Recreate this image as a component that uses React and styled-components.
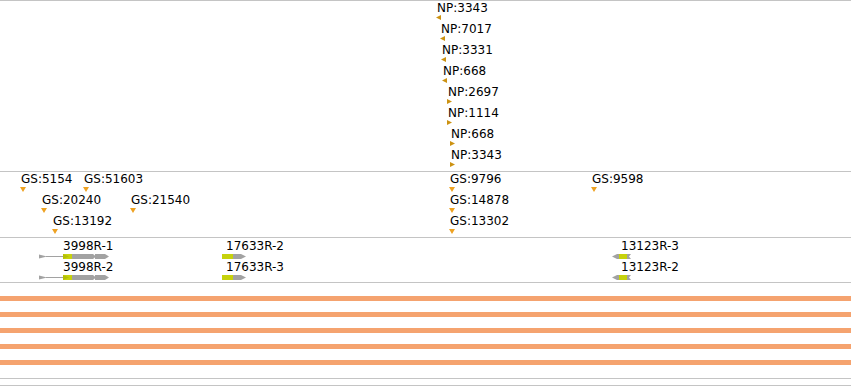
import React from "react";
import styled, { createGlobalStyle } from "styled-components";

const GlobalStyle = createGlobalStyle`
  html, body {
    margin: 0;
    padding: 0;
    background: #ffffff;
  }
  body {
    font-family: "DejaVu Sans", "Liberation Sans", sans-serif;
  }
`;

const Browser = styled.div`
  width: 851px;
  height: 386px;
  overflow: hidden;
  border-top: 1px solid #c4c4c4;
  display: flex;
  flex-direction: column;
  box-sizing: border-box;
`;

const Track = styled.div`
  position: relative;
  flex-shrink: 0;
  height: ${(p) => p.$h}px;
  border-bottom: 1px solid #c4c4c4;
`;

const Marker = styled.div`
  position: absolute;
  left: ${(p) => p.$x}px;
  top: ${(p) => p.$row * 21 + 1}px;
  display: flex;
  flex-direction: column;
  align-items: flex-start;
`;

const Label = styled.span`
  font-size: 12px;
  line-height: 13px;
  color: #000;
  white-space: nowrap;
  margin-left: ${(p) => p.$offset || 1}px;
`;

const Pin = styled.svg`
  display: block;
  margin-top: ${(p) => p.$gap}px;
`;

const Gene = styled.div`
  position: absolute;
  left: ${(p) => p.$x}px;
  top: ${(p) => p.$row * 21 + 2}px;
  display: flex;
  flex-direction: column;
  align-items: flex-start;
`;

const GeneGlyph = styled.svg`
  display: block;
  margin-top: 1px;
`;

const BarStack = styled.div`
  display: flex;
  flex-direction: column;
  gap: 11px;
  padding-top: 13px;
`;

const Bar = styled.div`
  height: 5px;
  background: #f5a36f;
`;

const GRAY = "#a2a2a2";
const LIME = "#c6d20c";

const Triangle = ({ dir, color, gap }) => {
  const w = dir === "down" ? 6 : 5;
  const pts = {
    left: "0,2.5 5,0 5,5",
    right: "0,0 5,2.5 0,5",
    down: "0,0 6,0 3,5",
  }[dir];
  return (
    <Pin $gap={gap} width={w} height={5} viewBox={`0 0 ${w} 5`}>
      <polygon points={pts} fill={color} />
    </Pin>
  );
};

const npFeatures = [
  { x: 436, row: 0, dir: "left", name: "NP:3343" },
  { x: 440, row: 1, dir: "left", name: "NP:7017" },
  { x: 441, row: 2, dir: "left", name: "NP:3331" },
  { x: 442, row: 3, dir: "left", name: "NP:668" },
  { x: 447, row: 4, dir: "right", name: "NP:2697" },
  { x: 447, row: 5, dir: "right", name: "NP:1114" },
  { x: 450, row: 6, dir: "right", name: "NP:668" },
  { x: 450, row: 7, dir: "right", name: "NP:3343" },
];

const gsFeatures = [
  { x: 20, row: 0, name: "GS:5154" },
  { x: 83, row: 0, name: "GS:51603" },
  { x: 41, row: 1, name: "GS:20240" },
  { x: 130, row: 1, name: "GS:21540" },
  { x: 52, row: 2, name: "GS:13192" },
  { x: 449, row: 0, name: "GS:9796" },
  { x: 449, row: 1, name: "GS:14878" },
  { x: 449, row: 2, name: "GS:13302" },
  { x: 591, row: 0, name: "GS:9598" },
];

// glyphs drawn in local coordinates, 5px tall
const Glyph3998 = () => (
  <GeneGlyph width={72} height={5} viewBox="0 0 72 5">
    <polygon points="0,0.5 8,2.5 0,4.5" fill={GRAY} />
    <rect x={7} y={2} width={17} height={1} fill={GRAY} />
    <rect x={24} y={0} width={9} height={5} fill={LIME} />
    <polygon points="24,0 30,2.5 24,5" fill="#b4bf08" />
    <polygon points="33,0 54,0 57,2.5 54,5 33,5" fill={GRAY} />
    <polygon points="56,0 66,0 70,2.5 66,5 56,5" fill={GRAY} />
  </GeneGlyph>
);

const Glyph17633 = () => (
  <GeneGlyph width={25} height={5} viewBox="0 0 25 5">
    <rect x={0} y={0} width={11} height={5} fill={LIME} />
    <polygon points="11,0 19,0 24,2.5 19,5 11,5" fill={GRAY} />
  </GeneGlyph>
);

const Glyph13123 = () => (
  <GeneGlyph width={20} height={5} viewBox="0 0 20 5">
    <polygon points="0,2.5 5,0 7,0 7,5 5,5" fill={GRAY} />
    <rect x={7} y={0} width={8} height={5} fill={LIME} />
    <polygon points="15,0 19,0 17,2.5 19,5 15,5" fill={GRAY} />
  </GeneGlyph>
);

const genes = [
  { x: 39, row: 0, label: 24, name: "3998R-1", Glyph: Glyph3998 },
  { x: 39, row: 1, label: 24, name: "3998R-2", Glyph: Glyph3998 },
  { x: 222, row: 0, label: 4, name: "17633R-2", Glyph: Glyph17633 },
  { x: 222, row: 1, label: 4, name: "17633R-3", Glyph: Glyph17633 },
  { x: 612, row: 0, label: 9, name: "13123R-3", Glyph: Glyph13123 },
  { x: 612, row: 1, label: 9, name: "13123R-2", Glyph: Glyph13123 },
];

export default function App() {
  return (
    <>
      <GlobalStyle />
      <Browser>
        <Track $h={170}>
          {npFeatures.map((f, i) => (
            <Marker key={i} $x={f.x} $row={f.row}>
              <Label>{f.name}</Label>
              <Triangle dir={f.dir} color="#cc9212" gap={0} />
            </Marker>
          ))}
        </Track>

        <Track $h={65}>
          {gsFeatures.map((f, i) => (
            <Marker key={i} $x={f.x} $row={f.row}>
              <Label>{f.name}</Label>
              <Triangle dir="down" color="#eea222" gap={1} />
            </Marker>
          ))}
        </Track>

        <Track $h={44}>
          {genes.map(({ x, row, label, name, Glyph }, i) => (
            <Gene key={i} $x={x} $row={row}>
              <Label $offset={label}>{name}</Label>
              <Glyph />
            </Gene>
          ))}
        </Track>

        <Track $h={95}>
          <BarStack>
            <Bar />
            <Bar />
            <Bar />
            <Bar />
            <Bar />
          </BarStack>
        </Track>

        <Track $h={6} />
      </Browser>
    </>
  );
}
